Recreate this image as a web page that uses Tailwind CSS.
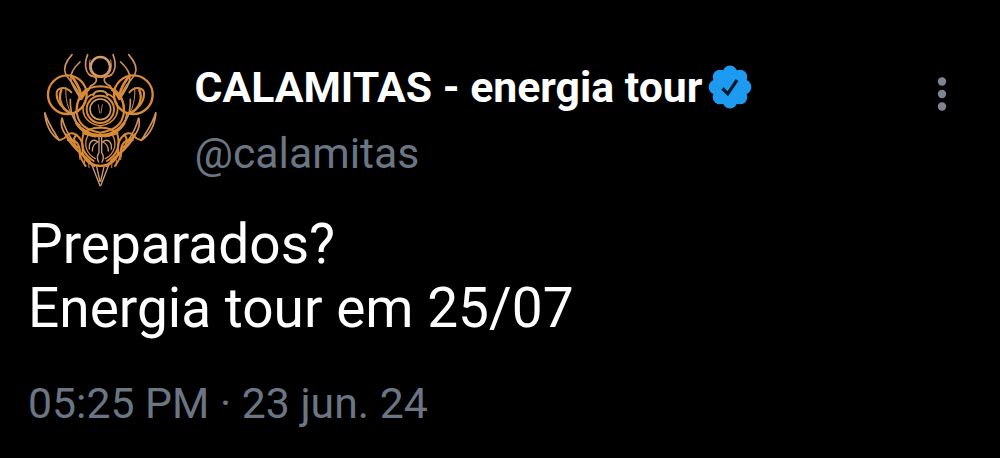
<!DOCTYPE html>
<html lang="pt-BR">

<head>
  <meta charset="UTF-8" />
  <meta name="viewport" content="width=device-width, initial-scale=1.0" />
  <title>CALAMITAS - energia tour</title>
  <script src="https://cdn.jsdelivr.net/npm/@tailwindcss/browser@4"></script>
</head>

<body class="bg-black overflow-hidden font-[Roboto,sans-serif]">
  <article class="h-[458px] pt-10 pl-[28px] pr-[48px] whitespace-nowrap">

    <!-- Author -->
    <header class="flex items-start h-[172px]">
      <svg class="w-[140px] h-[155px] ml-[2px] shrink-0" viewBox="0 0 420 465" fill="none" stroke="#d98a35"
        stroke-width="6" stroke-linecap="round" role="img" aria-label="Calamitas">
        <defs>
          <g id="wing">
            <circle cx="112" cy="164" r="58" stroke-width="7" />
            <g stroke="#cf9059" stroke-width="5">
              <path d="M126 44C108 64 99 84 107 102C116 122 143 137 151 176" />
              <path d="M150 66C130 84 119 100 123 120C127 142 141 154 151 176" />
              <path d="M173 44C160 76 168 106 190 109C205 115 201 129 183 137" />
              <path d="M180 60C175 82 180 98 190 105" stroke-width="3" />
              <path d="M44 217C47 252 60 282 88 301C70 273 54 251 44 217Z" />
              <path d="M96 233C88 264 104 288 132 308C112 280 102 260 96 233Z" />
              <path d="M108 143C104 188 120 228 151 256" stroke-width="3" />
              <path d="M121 178C119 226 139 262 180 278" />
              <path d="M132 222C136 258 160 284 197 290" />
            </g>
            <path d="M124 157C104 136 78 143 80 164C81 187 98 207 119 218" />
            <path d="M94 150C84 174 92 201 116 218" stroke-width="7" />
            <path d="M151 176C156 160 143 132 123 106" stroke-width="8" />
            <path d="M176 150C144 170 132 200 145 236C153 258 174 272 211 278" />
            <path d="M190 162C163 170 152 202 164 228C172 244 187 254 211 258" stroke-width="5" />
            <path d="M183 137C176 152 162 160 154 178" />
            <path d="M88 301C106 297 112 286 118 281C137 274 160 300 158 324C155 346 165 365 193 378" />
            <path d="M114 301C140 294 151 318 150 343C153 358 159 367 167 378" />
            <path d="M108 284C124 320 152 338 178 364" stroke-width="8" />
            <path d="M139 284C127 298 129 314 145 323" />
            <path d="M161 279C150 314 160 344 191 363" />
            <path d="M174 286C158 315 172 344 196 356" stroke-width="4" />
            <g stroke="#cf9c70" stroke-width="4">
              <path d="M178 327C176 304 190 294 204 306C191 311 187 320 187 333" />
              <path d="M207 292V338C199 350 201 358 206 366" />
              <path d="M186 376L210 437" />
              <path d="M200 380L210 424" />
              <path d="M147 339L150 359M163 360L164 378M176 367L177 383" stroke="#d98a35" stroke-width="3" />
            </g>
          </g>
        </defs>
        <use href="#wing" />
        <use href="#wing" transform="translate(422 0) scale(-1 1)" />
        <circle cx="211" cy="80" r="29" stroke="#d39c68" stroke-width="7" />
        <path d="M179 105C193 113 229 113 243 105" />
        <circle cx="211" cy="208" r="31" stroke="#d39c68" stroke-width="5" />
        <circle cx="211" cy="208" r="41" stroke-width="6" />
        <path d="M141 206C143 158 170 140 211 139C252 140 279 158 281 206" />
        <path d="M190 166C194 149 228 149 232 166" stroke="#cf9059" />
        <path d="M205 194L209 219M217 194L213 219" stroke="#a87850" stroke-width="3" />
        <path d="M139 250C170 298 252 298 283 250" stroke-width="8" />
        <path d="M160 279C182 258 240 258 262 279C240 292 182 292 160 279Z" />
        <path d="M176 361C189 383 233 383 246 361" stroke-width="7" />
      </svg>

      <div class="pt-[14px] pl-[24.5px] text-[42.75px] leading-[66px]">
        <div class="flex items-center">
          <h1 class="w-[513.5px] font-bold text-white">CALAMITAS - energia tour</h1>
          <svg class="w-[44px] h-[44px]" viewBox="0 0 44 44" role="img" aria-label="Conta verificada">
            <g fill="#1d9bf0">
              <circle cx="22" cy="22" r="17" />
              <circle cx="22" cy="8" r="7.4" />
              <circle cx="31.9" cy="12.1" r="7.4" />
              <circle cx="36" cy="22" r="7.4" />
              <circle cx="31.9" cy="31.9" r="7.4" />
              <circle cx="22" cy="36" r="7.4" />
              <circle cx="12.1" cy="31.9" r="7.4" />
              <circle cx="8" cy="22" r="7.4" />
              <circle cx="12.1" cy="12.1" r="7.4" />
            </g>
            <path d="M14.5 23.5L19.8 28.8L29 15" fill="none" stroke="#06182c" stroke-width="3.2" />
          </svg>
        </div>
        <p class="text-[#6b7684]">@calamitas</p>
      </div>

      <svg class="w-[10px] h-[36px] ml-auto mt-[36px] mr-[5px]" viewBox="0 0 10 36" fill="#7d8590" role="img" aria-label="Mais">
        <circle cx="5" cy="5.5" r="4.2" />
        <circle cx="5" cy="18" r="4.2" />
        <circle cx="5" cy="30.5" r="4.2" />
      </svg>
    </header>

    <!-- Post -->
    <p class="text-white text-[55px] leading-[64px]">Preparados?<br />Energia tour em 25/07</p>

    <time class="block mt-[38px] text-[#6b7684] text-[42.75px] leading-[50px]" datetime="2024-06-23T17:25">05:25 PM · 23 jun. 24</time>
  </article>
</body>

</html>
